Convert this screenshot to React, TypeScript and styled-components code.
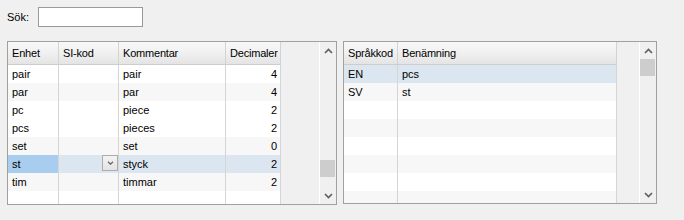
import { FC } from 'react'
import styled, { createGlobalStyle } from 'styled-components'

const GlobalStyle = createGlobalStyle`
  body {
    margin: 0;
    background: #f0f0f0;
    font-family: 'Liberation Sans', Arial, sans-serif;
    font-size: 11px;
    color: #000;
  }
`

type Tone = 'white' | 'alt' | 'sel'

const ROW_BG: Record<Tone, string> = {
  white: '#ffffff',
  alt: '#f7f7f7',
  sel: '#dbe6f0',
}

const Page = styled.div`
  padding: 7px 0 0 7px;
`

const SearchRow = styled.div`
  display: flex;
  align-items: center;
  height: 20px;
`

const SearchLabel = styled.label`
  width: 31px;
`

const SearchInput = styled.input`
  box-sizing: border-box;
  width: 105px;
  height: 20px;
  margin: 0;
  border: 1px solid #9a9a9a;
  background: #fff;
  outline: none;
`

const Panels = styled.div`
  display: flex;
  align-items: flex-start;
  gap: 6px;
  margin-top: 14px;
`

const GridBox = styled.div<{ $w: number; $h: number }>`
  box-sizing: border-box;
  display: flex;
  width: ${(p) => p.$w}px;
  height: ${(p) => p.$h}px;
  border: 1px solid #a0a0a0;
  background: #f0f0f0;
`

const Table = styled.div`
  display: flex;
  flex-direction: column;
  overflow: hidden;
`

const HeaderRow = styled.div`
  display: flex;
  flex: none;
  height: 23px;
`

const HeadCell = styled.div<{ $w: number }>`
  box-sizing: border-box;
  width: ${(p) => p.$w}px;
  padding-left: 4px;
  display: flex;
  align-items: center;
  overflow: hidden;
  background: linear-gradient(to bottom, #f8f8f8 0%, #f1f1f1 45%, #e4e4e4 100%);
  border-right: 1px solid #d3d3d3;
  border-bottom: 1px solid #cdcdcd;
  letter-spacing: -0.2px;
  white-space: nowrap;
`

const Row = styled.div<{ $tone: Tone }>`
  display: flex;
  flex: none;
  height: 18px;
  background: ${(p) => ROW_BG[p.$tone]};
`

const Cell = styled.div<{ $w: number; $right?: boolean; $focus?: boolean }>`
  box-sizing: border-box;
  width: ${(p) => p.$w}px;
  padding: 0 ${(p) => (p.$right ? '3px' : '4px')};
  display: flex;
  align-items: center;
  justify-content: ${(p) => (p.$right ? 'flex-end' : 'flex-start')};
  border-right: 1px solid #d5d5d5;
  background: ${(p) => (p.$focus ? '#a9cdee' : 'transparent')};
  white-space: nowrap;
`

const ComboCell = styled.div<{ $w: number }>`
  box-sizing: border-box;
  width: ${(p) => p.$w}px;
  display: flex;
  justify-content: flex-end;
  align-items: flex-start;
  border-right: 1px solid #d5d5d5;
`

const ComboButton = styled.div`
  box-sizing: border-box;
  width: 16px;
  height: 16px;
  display: flex;
  align-items: center;
  justify-content: center;
  border: 1px solid #acacac;
  background: linear-gradient(to bottom, #f3f3f3, #e3e3e3);
  color: #6a6a6a;
`

const Filler = styled.div<{ $w: number }>`
  width: ${(p) => p.$w}px;
`

const ScrollBar = styled.div`
  box-sizing: border-box;
  width: 17px;
  display: flex;
  flex-direction: column;
  border-left: 1px solid #ffffff;
  background: #f0f0f0;
`

const ScrollArrow = styled.div`
  height: 17px;
  flex: none;
  display: flex;
  align-items: center;
  justify-content: center;
  color: #606060;
`

const ScrollTrack = styled.div`
  flex: 1;
`

const Thumb = styled.div<{ $top: number }>`
  width: 15px;
  height: 17px;
  margin-top: ${(p) => p.$top}px;
  background: #cdcdcd;
`

const Chevron: FC<{ up?: boolean }> = ({ up }) => (
  <svg width='9' height='6' viewBox='0 0 9 6'>
    <path
      d={up ? 'M1 5 L4.5 1.5 L8 5' : 'M1 1 L4.5 4.5 L8 1'}
      fill='none'
      stroke='currentColor'
      strokeWidth='1.7'
    />
  </svg>
)

const SmallChevron = () => (
  <svg width='7' height='4' viewBox='0 0 7 4'>
    <path d='M1 0.8 L3.5 3.2 L6 0.8' fill='none' stroke='currentColor' strokeWidth='1.3' />
  </svg>
)

const Scroller: FC<{ thumbTop: number }> = ({ thumbTop }) => (
  <ScrollBar>
    <ScrollArrow>
      <Chevron up />
    </ScrollArrow>
    <ScrollTrack>
      <Thumb $top={thumbTop} />
    </ScrollTrack>
    <ScrollArrow>
      <Chevron />
    </ScrollArrow>
  </ScrollBar>
)

type Unit = { enhet: string; si: string; komm: string; dec: string; tone: Tone }

const units: Unit[] = [
  { enhet: 'pair', si: '', komm: 'pair', dec: '4', tone: 'white' },
  { enhet: 'par', si: '', komm: 'par', dec: '4', tone: 'alt' },
  { enhet: 'pc', si: '', komm: 'piece', dec: '2', tone: 'white' },
  { enhet: 'pcs', si: '', komm: 'pieces', dec: '2', tone: 'white' },
  { enhet: 'set', si: '', komm: 'set', dec: '0', tone: 'alt' },
  { enhet: 'st', si: '', komm: 'styck', dec: '2', tone: 'sel' },
  { enhet: 'tim', si: '', komm: 'timmar', dec: '2', tone: 'alt' },
  { enhet: '', si: '', komm: '', dec: '', tone: 'white' },
  { enhet: '', si: '', komm: '', dec: '', tone: 'alt' },
]

const names: { kod: string; ben: string; tone: Tone }[] = [
  { kod: 'EN', ben: 'pcs', tone: 'sel' },
  { kod: 'SV', ben: 'st', tone: 'alt' },
  { kod: '', ben: '', tone: 'white' },
  { kod: '', ben: '', tone: 'alt' },
  { kod: '', ben: '', tone: 'white' },
  { kod: '', ben: '', tone: 'alt' },
  { kod: '', ben: '', tone: 'white' },
  { kod: '', ben: '', tone: 'alt' },
  { kod: '', ben: '', tone: 'white' },
]

const LEFT_COLS = [51, 60, 107, 55]
const RIGHT_COLS = [54, 219]

export default function App() {
  return (
    <>
      <GlobalStyle />
      <Page>
        <SearchRow>
          <SearchLabel>Sök:</SearchLabel>
          <SearchInput type='text' />
        </SearchRow>
        <Panels>
          <GridBox $w={330} $h={164}>
            <Table>
              <HeaderRow>
                <HeadCell $w={LEFT_COLS[0]}>Enhet</HeadCell>
                <HeadCell $w={LEFT_COLS[1]}>SI-kod</HeadCell>
                <HeadCell $w={LEFT_COLS[2]}>Kommentar</HeadCell>
                <HeadCell $w={LEFT_COLS[3]}>Decimaler</HeadCell>
              </HeaderRow>
              {units.map((u, i) => (
                <Row key={i} $tone={u.tone}>
                  <Cell $w={LEFT_COLS[0]} $focus={u.tone === 'sel'}>
                    {u.enhet}
                  </Cell>
                  {u.tone === 'sel' ? (
                    <ComboCell $w={LEFT_COLS[1]}>
                      <ComboButton>
                        <SmallChevron />
                      </ComboButton>
                    </ComboCell>
                  ) : (
                    <Cell $w={LEFT_COLS[1]}>{u.si}</Cell>
                  )}
                  <Cell $w={LEFT_COLS[2]}>{u.komm}</Cell>
                  <Cell $w={LEFT_COLS[3]} $right>
                    {u.dec}
                  </Cell>
                </Row>
              ))}
            </Table>
            <Filler $w={38} />
            <Scroller thumbTop={101} />
          </GridBox>
          <GridBox $w={314} $h={163}>
            <Table>
              <HeaderRow>
                <HeadCell $w={RIGHT_COLS[0]}>Språkkod</HeadCell>
                <HeadCell $w={RIGHT_COLS[1]}>Benämning</HeadCell>
              </HeaderRow>
              {names.map((n, i) => (
                <Row key={i} $tone={n.tone}>
                  <Cell $w={RIGHT_COLS[0]}>{n.kod}</Cell>
                  <Cell $w={RIGHT_COLS[1]}>{n.ben}</Cell>
                </Row>
              ))}
            </Table>
            <Filler $w={22} />
            <Scroller thumbTop={0} />
          </GridBox>
        </Panels>
      </Page>
    </>
  )
}
